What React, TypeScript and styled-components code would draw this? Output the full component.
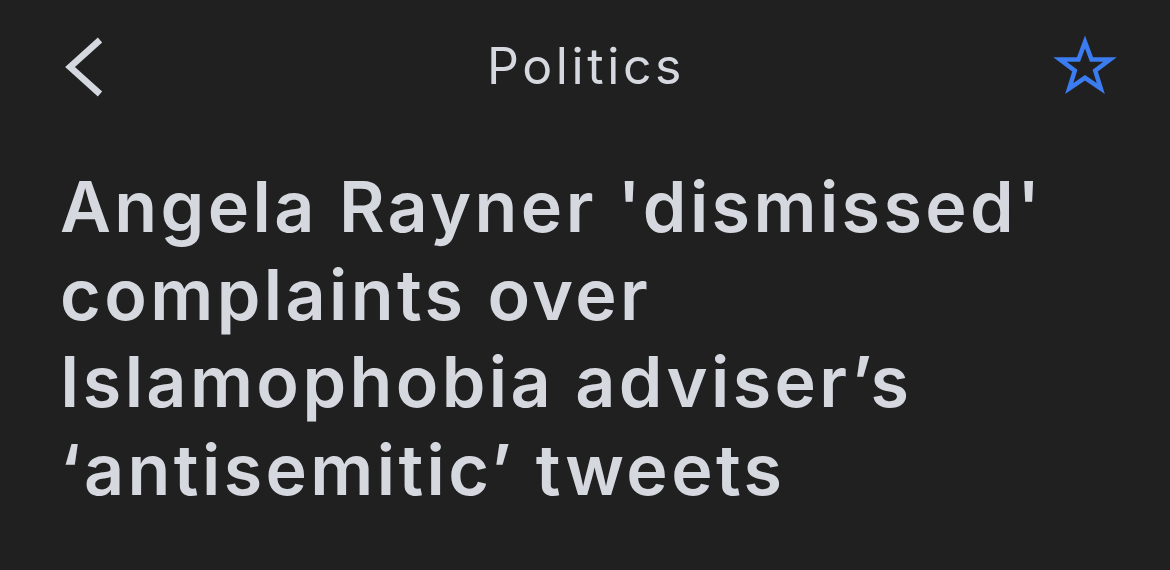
import React from 'react'
import styled, { createGlobalStyle } from 'styled-components'

const GlobalStyle = createGlobalStyle`
    html, body {
        margin: 0;
        padding: 0;
        background: #202020;
    }
    body {
        font-family: Inter, "Open Sans", "Liberation Sans", sans-serif;
        color: #d6d8df;
    }
`

const Page = styled.div`
    width: 1170px;
    height: 570px;
    background: #202020;
    overflow: hidden;
`

const TopBar = styled.div`
    display: flex;
    align-items: center;
    justify-content: space-between;
    height: 132px;
    padding: 0 53px 0 63px;
    box-sizing: border-box;
`

const IconButton = styled.button`
    display: flex;
    align-items: center;
    justify-content: center;
    width: 64px;
    height: 64px;
    padding: 0;
    border: none;
    background: transparent;
    cursor: pointer;
`

const Section = styled.span`
    font-size: 50px;
    font-weight: 400;
    color: #d6d8df;
    letter-spacing: 3.6px;
    margin-right: 8px;
`

const Headline = styled.h1`
    margin: 0;
    padding: 31px 60px 0;
    font-size: 70px;
    font-weight: 600;
    line-height: 87.5px;
    letter-spacing: 3.4px;
    color: #d6d8df;
`

export default function App(){
    return(
        <>
            <GlobalStyle/>
            <Page>
                <TopBar>
                    <IconButton aria-label="Back">
                        <svg width="64" height="64" viewBox="0 0 64 64">
                            <polyline points="37,6 7,33 37,60" fill="none" stroke="#d6d8df" strokeWidth="6.5" strokeLinecap="butt" strokeLinejoin="miter"/>
                        </svg>
                    </IconButton>
                    <Section>Politics</Section>
                    <IconButton aria-label="Save">
                        <svg width="64" height="64" viewBox="0 0 64 64">
                            <polygon
                                points="32,8 38.5,25.5 57,25.5 42.2,36.6 47.8,54.5 32,43.8 16.2,54.5 21.8,36.6 7,25.5 25.5,25.5"
                                fill="none"
                                stroke="#3b7cf0"
                                strokeWidth="4.5"
                                strokeLinejoin="miter"
                            />
                        </svg>
                    </IconButton>
                </TopBar>
                <Headline>
                    Angela Rayner 'dismissed'<br/>
                    complaints over<br/>
                    Islamophobia adviser’s<br/>
                    ‘antisemitic’ tweets
                </Headline>
            </Page>
        </>
    )
}
